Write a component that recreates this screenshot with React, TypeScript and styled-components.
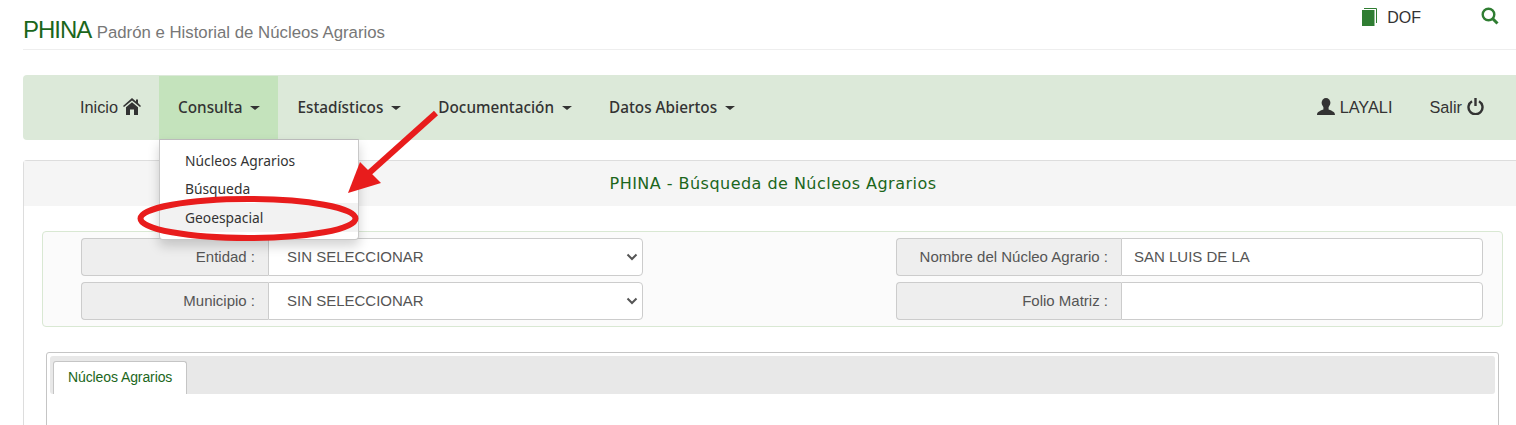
import React from "react";
import styled, { createGlobalStyle } from "styled-components";

const GlobalStyle = createGlobalStyle`
  html, body {
    margin: 0;
    padding: 0;
    background: #fff;
    overflow: hidden;
  }
  body {
    font-family: "Liberation Sans", Arial, sans-serif;
    font-size: 14px;
    color: #333;
  }
`;

const Page = styled.div`
  position: relative;
  width: 1516px;
  height: 425px;
  padding-left: 23px;
  box-sizing: border-box;
  overflow: hidden;
`;

const Header = styled.header`
  display: flex;
  justify-content: space-between;
  height: 50px;
  box-sizing: border-box;
  border-bottom: 1px solid #eee;
`;

const Brand = styled.h1`
  margin: 16px 0 0;
  font-weight: 400;
  font-size: 24px;
  line-height: 28px;
  color: #1b661b;
  letter-spacing: -1px;
  small {
    margin-left: 1px;
    font-size: 16.8px;
    letter-spacing: 0;
    color: #777;
  }
`;

const TopLinks = styled.div`
  display: flex;
  align-items: flex-start;
  padding: 7px 17px 0 0;
  font-size: 16px;
  line-height: 18px;
  color: #333;
`;

const DofLink = styled.span`
  display: flex;
  align-items: center;
  gap: 9px;
  margin-right: 60px;
  span {
    margin-top: 2px;
  }
`;

const SearchLink = styled.span`
  display: flex;
`;

const Navbar = styled.nav`
  display: flex;
  justify-content: space-between;
  margin-top: 25px;
  height: 65px;
  box-sizing: border-box;
  padding: 1px 32px 1px 38px;
  background: #dce9d9;
  border-radius: 4px 0 0 4px;
`;

const NavGroup = styled.div`
  display: flex;
`;

const NavItem = styled.a<{ $flush?: boolean }>`
  display: flex;
  align-items: center;
  gap: 5px;
  padding: 0 ${(p) => (p.$flush ? "0" : "18px")} 0 19px;
  font-size: 16.3px;
  color: #333;
`;

const MenuItem = styled.a<{ $active?: boolean }>`
  display: flex;
  align-items: center;
  gap: 5px;
  padding: 0 18px 1px 19px;
  font-family: "Noto Sans", sans-serif;
  font-size: 15.3px;
  font-weight: 500;
  color: #333;
  background: ${(p) => (p.$active ? "#c4e3bc" : "transparent")};
`;

const Caret = styled.i`
  display: inline-block;
  margin-left: 3px;
  margin-top: 2px;
  border-top: 4px solid #333;
  border-left: 5px solid transparent;
  border-right: 5px solid transparent;
`;

const NavGlyph = styled.svg`
  flex: none;
  margin-top: -3px;
`;

const Panel = styled.section`
  margin-top: 20px;
  border: 1px solid #ddd;
  border-right: 0;
  border-radius: 4px 0 0 0;
  height: 300px;
`;

const PanelTitle = styled.div`
  height: 45px;
  background: #f5f5f5;
  display: flex;
  align-items: center;
  justify-content: center;
  padding-left: 6px;
  font-family: "DejaVu Sans", Verdana, sans-serif;
  font-size: 16px;
  letter-spacing: 0.47px;
  font-weight: 400;
  color: #1b661b;
`;

const Filters = styled.div`
  display: flex;
  justify-content: space-between;
  margin: 25px 13px 0 18px;
  height: 96px;
  box-sizing: border-box;
  padding: 6px 19px 0 38px;
  background: #fbfbfb;
  border: 1px solid #d9e8d3;
  border-radius: 4px;
`;

const FilterColumn = styled.div<{ $width: number }>`
  display: flex;
  flex-direction: column;
  gap: 6px;
  width: ${(p) => p.$width}px;
`;

const Group = styled.div`
  display: flex;
  height: 38px;
`;

const Addon = styled.label<{ $width: number }>`
  width: ${(p) => p.$width}px;
  box-sizing: border-box;
  display: flex;
  align-items: center;
  justify-content: flex-end;
  padding: 0 13px 1px 0;
  background: #eee;
  border: 1px solid #ccc;
  border-right: 0;
  border-radius: 4px 0 0 4px;
  color: #555;
  font-size: 15px;
`;

const Select = styled.select`
  flex: 1;
  min-width: 0;
  box-sizing: border-box;
  height: 38px;
  padding: 0 30px 1px 18px;
  appearance: none;
  background: #fff url("data:image/svg+xml,%3Csvg xmlns='http://www.w3.org/2000/svg' width='12' height='8' viewBox='0 0 12 8'%3E%3Cpath d='M1.5 1.5L6 6l4.5-4.5' fill='none' stroke='%23555' stroke-width='2'/%3E%3C/svg%3E") no-repeat right 4px center;
  border: 1px solid #ccc;
  border-radius: 0 4px 4px 0;
  color: #555;
  font-family: "Liberation Sans", Arial, sans-serif;
  font-size: 15px;
`;

const Input = styled.input`
  flex: 1;
  min-width: 0;
  box-sizing: border-box;
  height: 38px;
  padding: 0 12px 1px;
  background: #fff;
  border: 1px solid #ccc;
  border-radius: 0 4px 4px 0;
  color: #555;
  font-family: "Liberation Sans", Arial, sans-serif;
  font-size: 15px;
`;

const TabsBox = styled.div`
  margin: 25px 17px 0 22px;
  height: 120px;
  padding: 3px;
  background: #fff;
  border: 1px solid #c5c5c5;
  border-radius: 3px;
`;

const TabStrip = styled.div`
  display: flex;
  align-items: flex-end;
  height: 38px;
  padding-left: 3px;
  background: #e8e8e8;
  border-radius: 3px;
`;

const Tab = styled.div`
  display: flex;
  align-items: center;
  height: 33px;
  box-sizing: border-box;
  padding: 0 14px 2px 14px;
  background: #fff;
  border: 1px solid #c5c5c5;
  border-bottom: 0;
  border-radius: 3px 3px 0 0;
  color: #1b661b;
  font-size: 14px;
  letter-spacing: -0.1px;
`;

const Dropdown = styled.ul`
  position: absolute;
  left: 159px;
  top: 139px;
  width: 200px;
  height: 101px;
  box-sizing: border-box;
  margin: 0;
  padding: 6px 0 0;
  list-style: none;
  background: #fff;
  border: 1px solid #c8c8c8;
  border-top-color: #bbb;
  border-radius: 0 0 4px 4px;
  box-shadow: 0 6px 12px rgba(0, 0, 0, 0.175);
`;

const DropdownItem = styled.li<{ $hover?: boolean }>`
  height: 28.5px;
  display: flex;
  align-items: center;
  padding-left: 25px;
  font-family: "Noto Sans", sans-serif;
  font-size: 13.8px;
  color: #333;
  background: ${(p) => (p.$hover ? "#f2f2f2" : "transparent")};
`;

const Annotation = styled.svg`
  position: absolute;
  left: 0;
  top: 0;
  pointer-events: none;
`;

const BookIcon = () => (
  <svg width="16" height="18" viewBox="0 0 16 18">
    <path d="M0 2h12.5v16H0z" fill="#2f7d32" />
    <path d="M2 .5h12.5V15" fill="none" stroke="#2f7d32" strokeWidth="1" />
  </svg>
);

const SearchIcon = () => (
  <svg width="18" height="18" viewBox="0 0 18 18" fill="none" stroke="#2f7d32">
    <circle cx="7.5" cy="7.5" r="5.8" strokeWidth="2.4" />
    <path d="M11.5 11.5L16.5 16.5" strokeWidth="3" />
  </svg>
);

const HomeIcon = () => (
  <NavGlyph width="18" height="17" viewBox="0 0 18 17" fill="#333">
    <path d="M9 0L13 3.4V1.5h2v3.6L18 8l-1 1L9 2.4 1 9 0 8z" />
    <path d="M3 9.2L9 4.2l6 5V17h-4v-5.5H7V17H3z" />
  </NavGlyph>
);

const UserIcon = () => (
  <NavGlyph width="18" height="17" viewBox="0 0 18 17" fill="#333">
    <ellipse cx="9" cy="4.8" rx="4.4" ry="4.8" />
    <path d="M0 17c0-3.2 2.4-4 6.4-5.6V9h5.2v2.4c4 1.6 6.4 2.4 6.4 5.6z" />
  </NavGlyph>
);

const PowerIcon = () => (
  <NavGlyph width="17" height="17" viewBox="0 0 17 17" fill="none" stroke="#333" strokeWidth="2.4">
    <path d="M5 3.2a7 7 0 1 0 7 0" />
    <path d="M8.5 0v8" />
  </NavGlyph>
);

const App = () => {
  return (
    <Page>
      <GlobalStyle />
      <Header>
        <Brand>
          PHINA <small>Padrón e Historial de Núcleos Agrarios</small>
        </Brand>
        <TopLinks>
          <DofLink>
            <BookIcon />
            <span>DOF</span>
          </DofLink>
          <SearchLink>
            <SearchIcon />
          </SearchLink>
        </TopLinks>
      </Header>

      <Navbar>
        <NavGroup>
          <NavItem>
            Inicio <HomeIcon />
          </NavItem>
          <MenuItem $active>
            Consulta <Caret />
          </MenuItem>
          <MenuItem>
            Estadísticos <Caret />
          </MenuItem>
          <MenuItem>
            Documentación <Caret />
          </MenuItem>
          <MenuItem>
            Datos Abiertos <Caret />
          </MenuItem>
        </NavGroup>
        <NavGroup>
          <NavItem>
            <UserIcon /> LAYALI
          </NavItem>
          <NavItem $flush>
            Salir <PowerIcon />
          </NavItem>
        </NavGroup>
      </Navbar>

      <Panel>
        <PanelTitle>PHINA - Búsqueda de Núcleos Agrarios</PanelTitle>
        <Filters>
          <FilterColumn $width={562}>
            <Group>
              <Addon $width={187}>Entidad :</Addon>
              <Select defaultValue="">
                <option value="">SIN SELECCIONAR</option>
              </Select>
            </Group>
            <Group>
              <Addon $width={187}>Municipio :</Addon>
              <Select defaultValue="">
                <option value="">SIN SELECCIONAR</option>
              </Select>
            </Group>
          </FilterColumn>
          <FilterColumn $width={587}>
            <Group>
              <Addon $width={225}>Nombre del Núcleo Agrario :</Addon>
              <Input defaultValue="SAN LUIS DE LA" />
            </Group>
            <Group>
              <Addon $width={225}>Folio Matriz :</Addon>
              <Input />
            </Group>
          </FilterColumn>
        </Filters>
        <TabsBox>
          <TabStrip>
            <Tab>Núcleos Agrarios</Tab>
          </TabStrip>
        </TabsBox>
      </Panel>

      <Dropdown>
        <DropdownItem>Núcleos Agrarios</DropdownItem>
        <DropdownItem>Búsqueda</DropdownItem>
        <DropdownItem $hover>Geoespacial</DropdownItem>
      </Dropdown>

      <Annotation width="1516" height="425" viewBox="0 0 1516 425">
        <ellipse cx="248" cy="218.5" rx="107.5" ry="19.5" fill="none" stroke="#e81c1c" strokeWidth="6" />
        <path d="M436 113L368 174" stroke="#e81c1c" strokeWidth="6" strokeLinecap="butt" />
        <path d="M348 193L360 162L381 183Z" fill="#e81c1c" />
      </Annotation>
    </Page>
  );
};

export default App;
